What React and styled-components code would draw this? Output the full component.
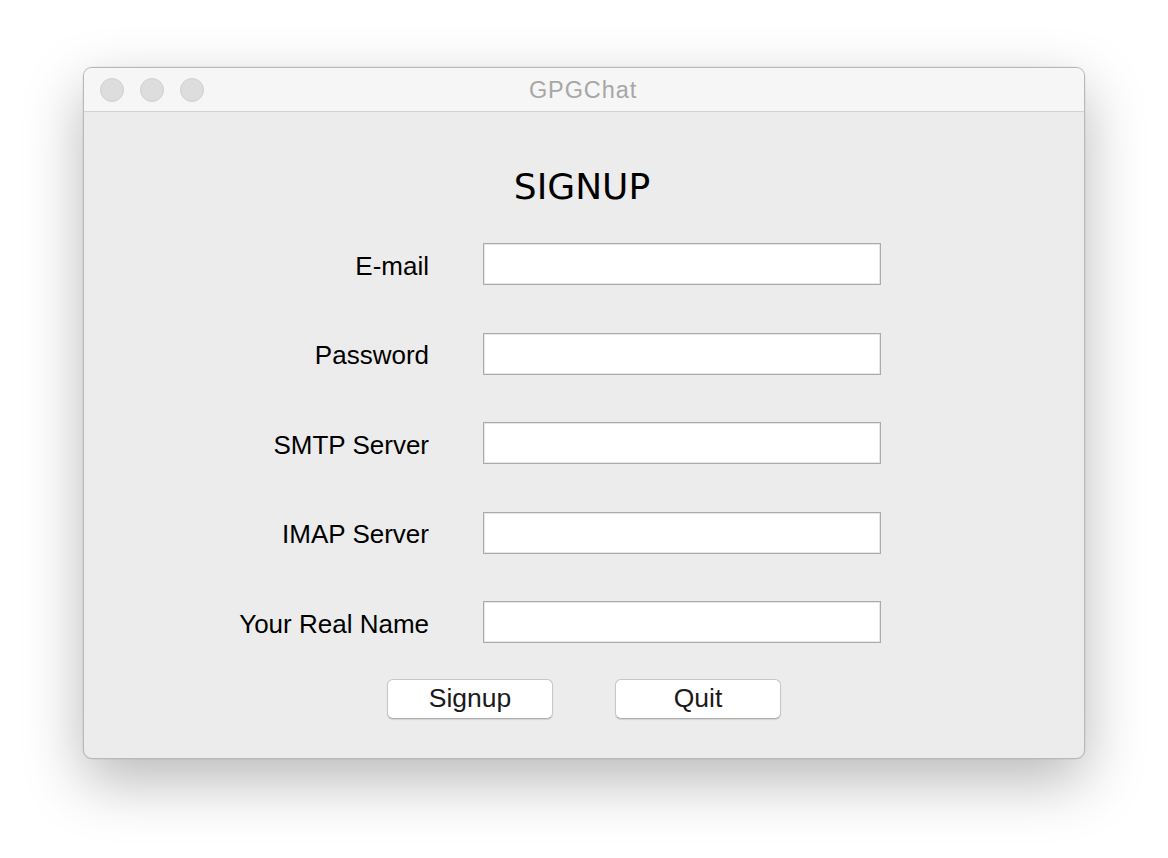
import React from "react";
import styled, { createGlobalStyle } from "styled-components";

const Global = createGlobalStyle`
  html, body { margin: 0; padding: 0; background: #ffffff; }
  body { width: 1168px; height: 858px; overflow: hidden; font-family: "Liberation Sans", Arial, sans-serif; }
  * { box-sizing: border-box; }
`;

const Desktop = styled.div`
  width: 1168px;
  height: 858px;
  padding: 67px 0 0 83px;
  background: #ffffff;
`;

const Window = styled.div`
  width: 1002px;
  height: 692px;
  display: flex;
  flex-direction: column;
  border: 1px solid #b9b9b9;
  border-radius: 9px;
  background: #ececec;
  overflow: hidden;
  box-shadow: 0 22px 60px rgba(0, 0, 0, 0.28), 0 0 0 0.5px rgba(0, 0, 0, 0.08);
`;

const TitleBar = styled.div`
  position: relative;
  height: 44px;
  flex: none;
  display: flex;
  align-items: center;
  padding-left: 16px;
  gap: 16px;
  background: #f6f6f6;
  border-bottom: 1px solid #d3d3d3;
`;

const Light = styled.span`
  width: 24px;
  height: 24px;
  border-radius: 50%;
  background: #dddddd;
  border: 1px solid #d0d0d0;
  flex: none;
`;

const Title = styled.div`
  position: absolute;
  left: 0;
  right: 0;
  top: 0;
  bottom: 0;
  padding: 2px 2px 0 0;
  display: flex;
  align-items: center;
  justify-content: center;
  font-family: "Liberation Sans", Arial, sans-serif;
  font-size: 23.5px;
  letter-spacing: 0.9px;
  color: #a7a7a7;
  pointer-events: none;
`;

const Content = styled.div`
  flex: 1;
  display: flex;
  flex-direction: column;
  padding-top: 56px;
`;

const Heading = styled.h1`
  margin: 0 0 38px 0;
  height: 37px;
  font-family: "DejaVu Sans", Verdana, sans-serif;
  font-weight: normal;
  font-size: 36px;
  line-height: 37px;
  text-align: center;
  color: #000000;
  padding-right: 4px;
`;

const Form = styled.div`
  display: grid;
  grid-template-columns: 345px 398px;
  grid-auto-rows: 42px;
  column-gap: 54px;
  row-gap: 47.5px;
`;

const Label = styled.label`
  align-self: center;
  justify-self: end;
  padding-top: 4px;
  font-family: "Liberation Sans", Arial, sans-serif;
  font-size: 26px;
  color: #000000;
  white-space: nowrap;
`;

const Input = styled.input`
  width: 398px;
  height: 42px;
  margin: 0;
  background: #ffffff;
  border: 1px solid #ababab;
  box-shadow: inset 0 0 0 1px #e6e6e6;
  outline: none;
  font-family: "Liberation Sans", Arial, sans-serif;
  font-size: 22px;
  padding: 0 6px;
`;

const Buttons = styled.div`
  display: flex;
  justify-content: center;
  gap: 62px;
  margin-top: 36px;
`;

const Button = styled.button`
  width: 166px;
  height: 40px;
  padding: 0 0 2px 0;
  background: #ffffff;
  border: 1px solid #c6c6c6;
  border-bottom-color: #b0b0b0;
  border-radius: 6px;
  box-shadow: 0 1px 1px rgba(0, 0, 0, 0.12);
  font-family: "Liberation Sans", Arial, sans-serif;
  font-size: 26.5px;
  color: #1a1a1a;
  cursor: default;
`;

const fields = ["E-mail", "Password", "SMTP Server", "IMAP Server", "Your Real Name"];

export default function App() {
  return (
    <>
      <Global />
      <Desktop>
        <Window>
          <TitleBar>
            <Light />
            <Light />
            <Light />
            <Title>GPGChat</Title>
          </TitleBar>
          <Content>
            <Heading>SIGNUP</Heading>
            <Form>
              {fields.map((f) => (
                <React.Fragment key={f}>
                  <Label>{f}</Label>
                  <Input type={f === "Password" ? "password" : "text"} />
                </React.Fragment>
              ))}
            </Form>
            <Buttons>
              <Button>Signup</Button>
              <Button>Quit</Button>
            </Buttons>
          </Content>
        </Window>
      </Desktop>
    </>
  );
}
